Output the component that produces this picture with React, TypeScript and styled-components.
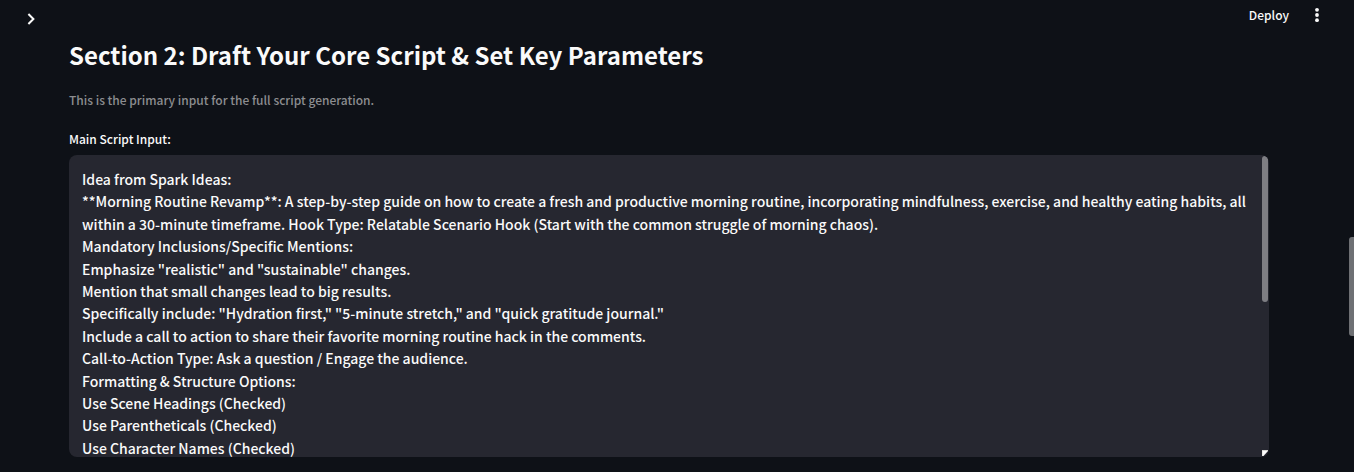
import React, { useState } from "react";
import styled, { createGlobalStyle } from "styled-components";

const GlobalStyle = createGlobalStyle`
  *, *::before, *::after { box-sizing: border-box; }
  html { background: #0e1117; }
  body {
    margin: 0;
    color: #fafafa;
    background: #0e1117;
    font-family: "Source Sans Pro", "Noto Sans CJK SC", "Noto Sans", sans-serif;
    font-size: 14px;
    font-weight: 500;
  }
  button, textarea { font: inherit; color: inherit; }
`;

const Page = styled.div`
  min-height: 100vh;
`;

const Toolbar = styled.header`
  display: flex;
  align-items: center;
  justify-content: space-between;
  height: 30px;
  padding: 0 29px 0 23px;
`;

const Actions = styled.div`
  display: flex;
  align-items: center;
  gap: 20px;
`;

const IconButton = styled.button`
  display: flex;
  align-items: center;
  justify-content: center;
  width: 16px;
  height: 16px;
  padding: 0;
  border: 0;
  background: none;
  cursor: pointer;
`;

const SidebarButton = styled(IconButton)`
  align-self: flex-end;
  margin-bottom: 3px;
`;

const DeployButton = styled.button`
  padding: 0;
  border: 0;
  background: none;
  font-size: 12px;
  line-height: 20px;
  cursor: pointer;
`;

const Main = styled.main`
  padding: 0 85px 12px 69px;
`;

const Title = styled.h2`
  margin: 7px 0 0;
  font-size: 24px;
  font-weight: 700;
  line-height: 36px;
`;

const Caption = styled.p`
  margin: 17px 0 0;
  color: #8c8d90;
  font-size: 12px;
  line-height: 20px;
`;

const Label = styled.label`
  display: block;
  margin: 19px 0 6px;
  font-size: 12px;
  line-height: 20px;
`;

const Field = styled.div`
  position: relative;
  overflow: hidden;
  border-radius: 8px;
  background: #262730;
`;

const ScriptInput = styled.textarea`
  display: block;
  width: 100%;
  height: 302px;
  padding: 13px 19px 13px 13px;
  border: 0;
  outline: 0;
  resize: none;
  background: none;
  font-size: 14px;
  line-height: 1.6;
  scrollbar-width: none;
`;

const FieldThumb = styled.span`
  position: absolute;
  top: 1px;
  right: 1px;
  width: 6px;
  height: 146px;
  border-radius: 3px;
  background: #7e7e83;
  pointer-events: none;
`;

const ResizeCorner = styled.svg`
  position: absolute;
  right: 1px;
  bottom: 1px;
  pointer-events: none;
`;

const PageThumb = styled.span`
  position: fixed;
  top: 237px;
  right: 0;
  width: 5px;
  height: 99px;
  border-radius: 3px 0 0 3px;
  background: #6e7074;
  pointer-events: none;
`;

const initialScript = `Idea from Spark Ideas:
**Morning Routine Revamp**: A step-by-step guide on how to create a fresh and productive morning routine, incorporating mindfulness, exercise, and healthy eating habits, all within a 30-minute timeframe. Hook Type: Relatable Scenario Hook (Start with the common struggle of morning chaos).
Mandatory Inclusions/Specific Mentions:
Emphasize "realistic" and "sustainable" changes.
Mention that small changes lead to big results.
Specifically include: "Hydration first," "5-minute stretch," and "quick gratitude journal."
Include a call to action to share their favorite morning routine hack in the comments.
Call-to-Action Type: Ask a question / Engage the audience.
Formatting & Structure Options:
Use Scene Headings (Checked)
Use Parentheticals (Checked)
Use Character Names (Checked)`;

export default function App() {
  const [script, setScript] = useState(initialScript);

  return (
    <Page>
      <GlobalStyle />
      <Toolbar>
        <SidebarButton aria-label="Open sidebar">
          <svg width="16" height="16" viewBox="0 0 16 16" fill="none" stroke="currentColor" strokeWidth="2">
            <path d="M5.4 3 L10.4 8 L5.4 13" />
          </svg>
        </SidebarButton>
        <Actions>
          <DeployButton>Deploy</DeployButton>
          <IconButton aria-label="Main menu">
            <svg width="16" height="16" viewBox="0 0 16 16" fill="currentColor">
              <circle cx="8" cy="2.8" r="1.9" />
              <circle cx="8" cy="8" r="1.9" />
              <circle cx="8" cy="13.2" r="1.9" />
            </svg>
          </IconButton>
        </Actions>
      </Toolbar>
      <Main>
        <Title>Section 2: Draft Your Core Script &amp; Set Key Parameters</Title>
        <Caption>This is the primary input for the full script generation.</Caption>
        <Label htmlFor="script">Main Script Input:</Label>
        <Field>
          <ScriptInput
            id="script"
            spellCheck={false}
            value={script}
            onChange={(event) => setScript(event.target.value)}
          />
          <FieldThumb aria-hidden="true" />
          <ResizeCorner aria-hidden="true" width="6" height="6" viewBox="0 0 6 6">
            <path d="M0 0 H6 V1 L1.5 6 H0 Z" fill="#fcfcfc" />
            <path d="M0 6 V0.5 H6" fill="none" stroke="#d8d8d4" />
          </ResizeCorner>
        </Field>
      </Main>
      <PageThumb aria-hidden="true" />
    </Page>
  );
}
